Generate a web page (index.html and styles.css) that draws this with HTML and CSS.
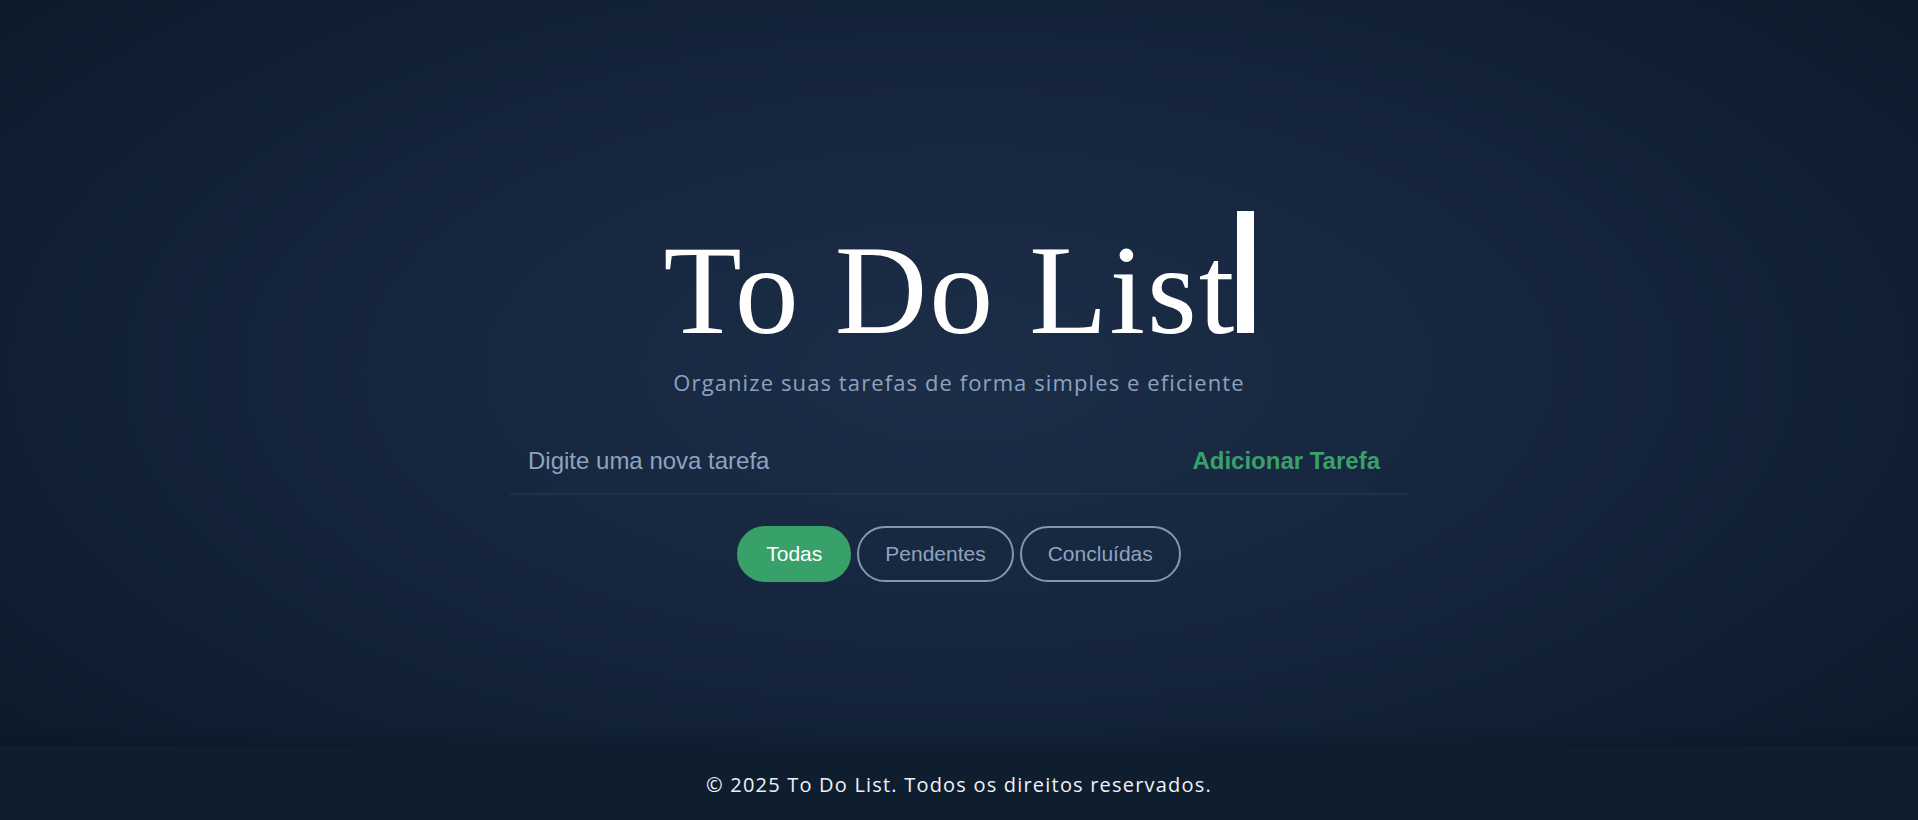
FILE: index.html
```html
<!DOCTYPE html>
<html lang="pt-BR">
<head>
  <meta charset="UTF-8" />
  <meta name="viewport" content="width=device-width, initial-scale=1.0" />
  <title>To Do List</title>
  <link rel="stylesheet" href="styles.css">
</head>
<body>
  <main class="app">
    <h1 class="title">To Do List<span class="cursor"></span></h1>
    <p class="subtitle">Organize suas tarefas de forma simples e eficiente</p>

    <form class="task-form" onsubmit="return false;">
      <input type="text" class="task-input" placeholder="Digite uma nova tarefa">
      <button type="submit" class="add-btn">Adicionar Tarefa</button>
    </form>

    <div class="filters">
      <button class="filter active">Todas</button>
      <button class="filter">Pendentes</button>
      <button class="filter">Concluídas</button>
    </div>

    <ul class="task-list"></ul>
  </main>

  <footer class="footer">
    <p>&copy; 2025 To Do List. Todos os direitos reservados.</p>
  </footer>
</body>
</html>
```

FILE: styles.css
```css
* {
  box-sizing: border-box;
}

html,
body {
  height: 100%;
}

body {
  margin: 0;
  display: flex;
  flex-direction: column;
  min-height: 100vh;
  background: radial-gradient(ellipse at 50% 45%, #1c2d47 0%, #172740 35%, #0f1e31 75%, #0b1828 100%);
  color: #ffffff;
  font-family: "Open Sans", "Liberation Sans", Arial, sans-serif;
}

.app {
  flex: 1;
  display: flex;
  flex-direction: column;
  align-items: center;
  padding-top: 211px;
}

.title {
  margin: 0;
  font-family: "Liberation Serif", "Times New Roman", serif;
  font-size: 128px;
  font-weight: 400;
  line-height: 1;
  letter-spacing: 2px;
  white-space: nowrap;
}

.cursor {
  display: inline-block;
  width: 17px;
  height: 122px;
  margin-left: 1px;
  background: #ffffff;
}

.subtitle {
  margin: 13px 0 0;
  font-size: 22px;
  line-height: 30px;
  letter-spacing: 1.1px;
  color: #8da2bf;
}

.task-form {
  display: flex;
  align-items: center;
  width: 898px;
  margin-top: 34px;
  border-bottom: 2px solid #1f3049;
}

.task-input {
  flex: 1;
  padding: 16px 16px 18px 18px;
  border: none;
  background: transparent;
  color: #e2e8f0;
  font-family: "Liberation Sans", Arial, sans-serif;
  font-size: 24px;
  outline: none;
}

.task-input::placeholder {
  color: #8fa3bf;
}

.add-btn {
  padding: 16px 28px 18px 16px;
  border: none;
  background: transparent;
  color: #38a169;
  font-family: "Liberation Sans", Arial, sans-serif;
  font-size: 24px;
  font-weight: 700;
  cursor: pointer;
}

.filters {
  display: flex;
  gap: 6px;
  margin-top: 31px;
}

.filter {
  padding: 14px 26px;
  border: 2px solid #8796b0;
  border-radius: 30px;
  background: transparent;
  color: #8fa3bf;
  font-family: "Liberation Sans", Arial, sans-serif;
  font-size: 21px;
  cursor: pointer;
}

.filter.active {
  border-color: #38a169;
  background: #38a169;
  color: #ffffff;
  padding: 14px 27px;
}

.task-list {
  margin: 0;
  padding: 0;
  list-style: none;
}

.footer {
  height: 74px;
  display: flex;
  align-items: center;
  justify-content: center;
  padding-top: 3px;
  background: #0f1e2f;
  box-shadow: 0 -4px 12px rgba(0, 0, 0, 0.15);
}

.footer p {
  margin: 0;
  font-size: 20px;
  letter-spacing: 1.2px;
  color: #eef2f7;
}
```
